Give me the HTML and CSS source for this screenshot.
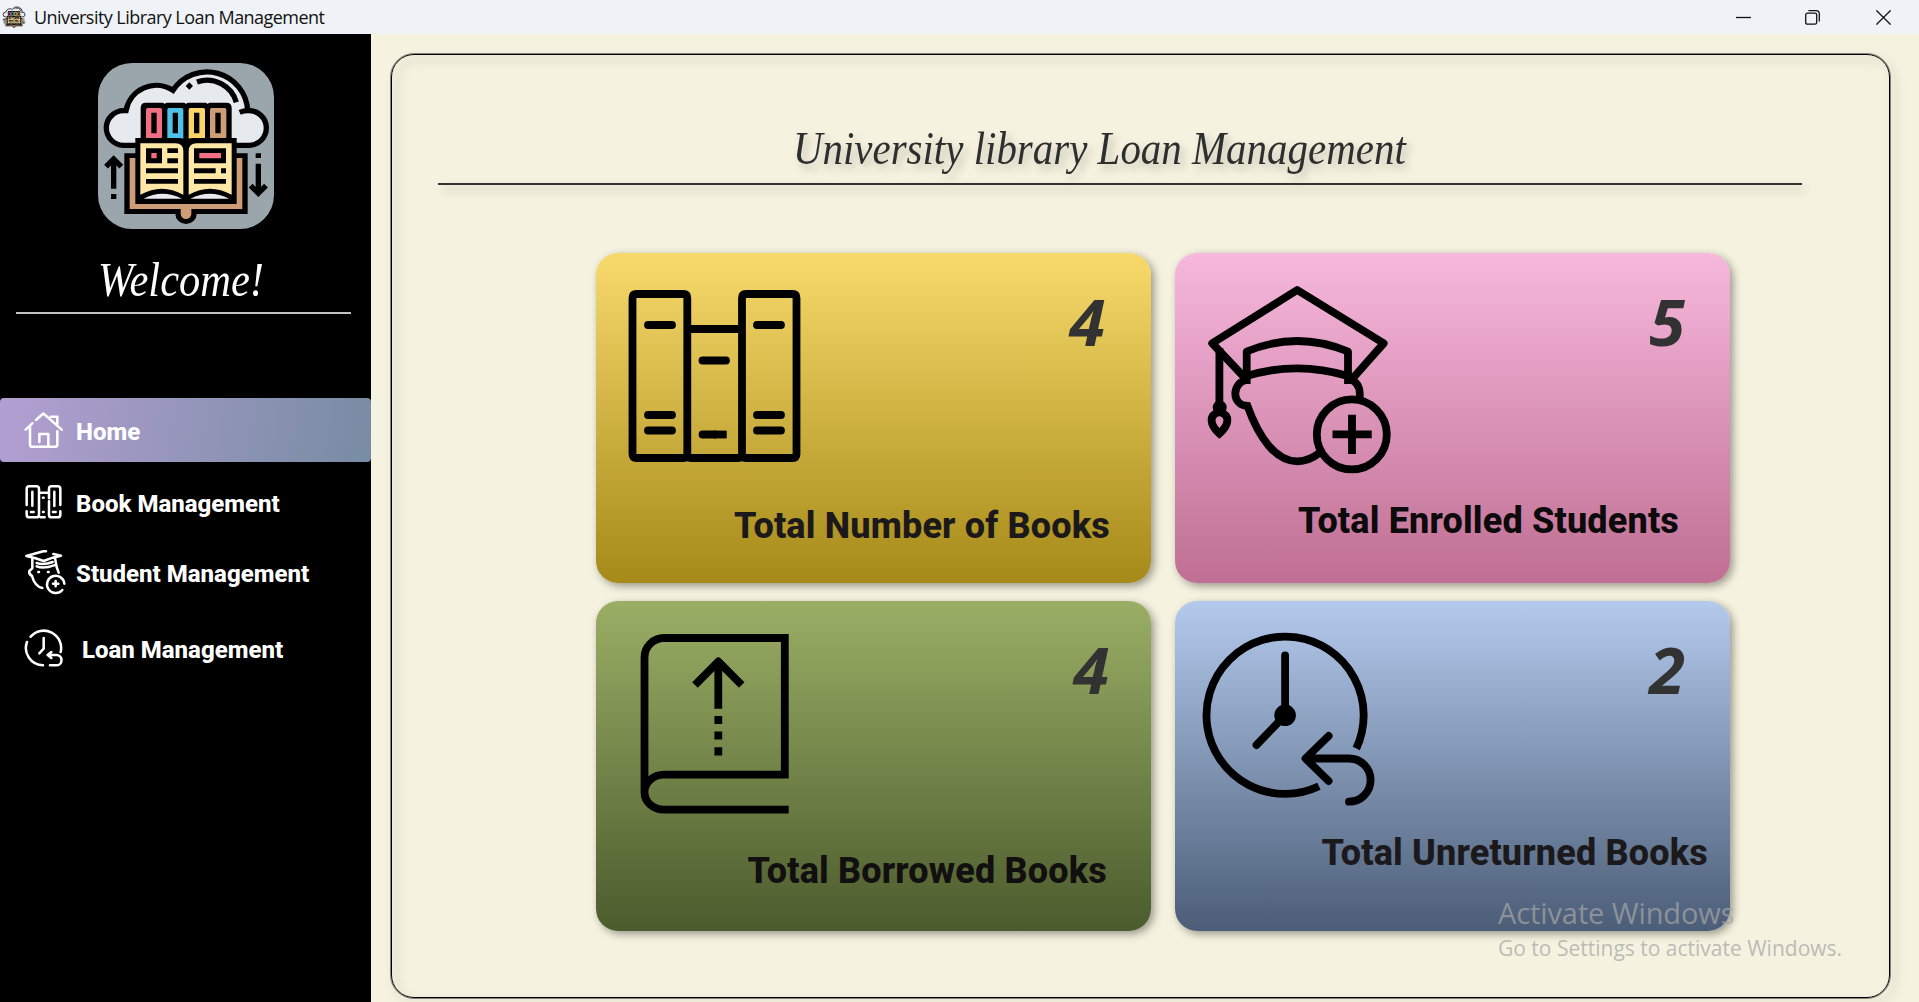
FILE: index.html
```html
<!DOCTYPE html>
<html lang="en">
<head>
<meta charset="utf-8">
<title>University Library Loan Management</title>
<link rel="stylesheet" href="styles.css">
</head>
<body>
<svg class="defs" aria-hidden="true">
  <symbol id="logo-art" viewBox="54 39 528 498">
    <g stroke="#000" stroke-width="16" fill="none">
      <path fill="#e6e9ee" d="M174 286H130A52 52 0 0 1 132 182H138A92 92 0 0 1 279 121A122 122 0 0 1 503 186V182A52 52 0 0 1 508 286H466Z" stroke="none"/>
      <path d="M174 286H130A52 52 0 0 1 132 182H138A92 92 0 0 1 279 121A122 122 0 0 1 503 182"/>
      <path d="M479 187Q490 182 506 182A52 52 0 0 1 508 286H466"/>
      <path d="M351 96A91 91 0 0 1 469 157"/>
    </g>
    <path d="M328 97l11 11-11 11-11-11z"/>
    <path d="M182 280V174q0-16 16-16h48q5 0 8 4 3-4 8-4h48q5 0 8 4 3-4 8-4h49q5 0 8 4 3-4 8-4h48q16 0 16 16v106z"/>
    <rect x="198" y="174" width="48" height="92" rx="5" fill="#f26f83"/>
    <path d="M262 179q0-5 5-5h38q5 0 5 5v92q-10-5-20-5h-28z" fill="#4fc1e9"/>
    <path d="M326 179q0-5 5-5h39q5 0 5 5v87h-28q-12 0-21 5z" fill="#fbd568"/>
    <rect x="390" y="174" width="49" height="92" rx="5" fill="#ce9c75"/>
    <path d="M214 188h16v62h-16zM278 188h16v62h-16zM342 188h16v62h-16zM406 188h16v62h-16z"/>
    <path d="M133 310H503V492H350a32 30 0 0 1-64 0H133z"/>
    <path fill="#ce9c75" d="M149 324H487V477H334V491a16 16 0 0 1-32 0V477H149z"/>
    <path d="M166 264H298q12 0 20 7 8-7 20-7H470V462H166z"/>
    <path fill="#ffe8a6" d="M181 280H286q24 0 24 24V434Q246 398 181 434zM455 280H350q-24 0-24 24V434Q390 398 455 434z"/>
    <path fill="#e6e9ee" d="M191 446Q246 417 306 446zM331 446Q390 417 447 446z"/>
    <path d="M198 295h48v45h-48zM262 295h32v14h-32zM262 325h32v15h-32zM198 355h96v15h-96zM198 387h96v14h-96zM342 295h96v45h-96zM342 355h65v15h-65zM423 355h15v15h-15zM342 387h96v14h-96z"/>
    <path fill="#f26f83" d="M214 309h16v16h-16zM358 309h65v16h-65z"/>
    <path d="M93 432h16v15H93zM527 310h16v14h-16z"/>
    <path fill="none" stroke="#000" stroke-width="16" d="M101 416V328M78 350l23-23 23 23M535 341v88M512 407l23 23 23-23"/>
  </symbol>
</svg>

<header class="titlebar">
  <svg class="titlebar__icon" viewBox="0 0 24 24"><use href="#logo-art" width="24" height="24"/></svg>
  <span class="titlebar__text">University Library Loan Management</span>
  <div class="titlebar__controls">
    <svg width="15" height="15" viewBox="0 0 15 15"><path d="M0 7.5H15"/></svg>
    <svg width="15" height="15" viewBox="0 0 15 15"><rect x=".7" y="3.2" width="11" height="11" rx="1.8"/><path d="M3.4 .7H11q3.3 0 3.3 3.3V11.6"/></svg>
    <svg width="15" height="15" viewBox="0 0 15 15"><path d="M.4 .4 14.6 14.6M14.6 .4 .4 14.6"/></svg>
  </div>
</header>

<div class="app">
  <aside class="sidebar">
    <div class="logo"><svg width="176" height="166"><use href="#logo-art" width="176" height="166"/></svg></div>
    <div class="welcome"><span>Welcome!</span></div>
    <nav class="nav">
      <a class="nav__item nav__item--active">
        <svg class="nav__icon" viewBox="72 60 132 120"><path d="M77 119 97 100M108 90 130 70 185 119M152 80H172V102M90 112V164Q90 170 96 170H166Q172 170 172 164V124M118 156V132H145V168"/></svg>
        <span>Home</span>
      </a>
      <a class="nav__item nav__item--books">
        <svg class="nav__icon" viewBox="72 276 132 120"><path d="M80 345V297Q80 289 88 289H109Q117 289 117 297V374Q117 382 109 382H88Q80 382 80 374V364M97 305V347M93 366H101M117 308H144M129 323H131M129 366H131M122 382H134M147 325V297Q147 289 154 289H173Q181 289 181 297V345M163 305V348M147 334V374Q147 382 154 382H173Q181 382 181 374V364M159 366H167"/></svg>
        <span>Book Management</span>
      </a>
      <a class="nav__item nav__item--students">
        <svg class="nav__icon nav__icon--tall" viewBox="72 480 132 138"><path d="M138 487H130L79 501 104 507 131 516 158 506 183 500 160 495M97 508V538L88 546Q86 556 96 561Q104 592 127 597M165 508 170 534 176 551M110 522Q131 529 158 519M110 532Q131 540 162 529M115 549H117M144 549H146M187 603A26 26 0 1 1 193 584M167 576V592M159 584H175"/></svg>
        <span>Student Management</span>
      </a>
      <a class="nav__item nav__item--loans">
        <svg class="nav__icon" viewBox="72 708 132 120"><path d="M92 734A52 52 0 0 1 182 780M81 750A52 52 0 0 0 129 820M131 738V770L118 784M143 789H169A15 15 0 0 1 169 820H150M154 780 143 789 154 798"/></svg>
        <span>Loan Management</span>
      </a>
    </nav>
  </aside>

  <main class="panel">
    <h1 class="panel__title"><span>University library Loan Management</span></h1>
    <section class="cards">
      <article class="card card--books">
        <svg class="card__icon" width="174" height="174" viewBox="628 289 174 174">
          <path d="M632.5 298Q632.5 294 636.5 294H683.3Q687.3 294 687.3 298V454Q687.3 458 683.3 458H636.5Q632.5 458 632.5 454ZM742 298Q742 294 746 294H792.5Q796.5 294 796.5 298V454Q796.5 458 792.5 458H746Q742 458 742 454ZM687 329H742M687 455Q687.5 458 691 458H738Q742 458 742 455"/>
          <path class="round" d="M648 325H672M648 415H672M648 430.5H672M757 325H781M757 415H781M757 430.5H781M702.5 360.5H726M702.5 434.5H715"/>
          <path d="M714 434.5H726.7"/>
        </svg>
        <output class="card__value">4</output>
        <h2 class="card__label">Total Number of Books</h2>
      </article>
      <article class="card card--students">
        <svg class="card__icon" width="186" height="190" viewBox="1206 284 186 190">
          <path stroke-linejoin="round" d="M1245 378 1212.2 343.3 1297.2 290 1383.7 343.3 1353 378"/>
          <path stroke-linejoin="round" d="M1246.7 384V351.5Q1297.2 330.5 1348 351.5V384M1246.7 376Q1297.2 360.6 1348 376"/>
          <path d="M1246 380C1232 383 1231 405 1247.5 406C1259 438 1276 461.3 1297.2 461.3Q1309 461.3 1320 452.5M1349 379C1357 381 1361 388 1359.5 398"/>
          <circle cx="1351.8" cy="434.4" r="35"/>
          <path d="M1332.5 434.4H1371.7M1352 414.7V454M1219.4 348V405"/>
          <circle class="solid" cx="1219.7" cy="407.5" r="7"/>
          <path d="M1219.4 412C1208 415 1210 425 1219.4 433.5C1229 425 1231 415 1219.4 412Z"/>
        </svg>
        <output class="card__value">5</output>
        <h2 class="card__label">Total Enrolled Students</h2>
      </article>
      <article class="card card--borrowed">
        <svg class="card__icon" width="150" height="182" viewBox="640 633 150 182">
          <path d="M788.7 809.7H664A19.5 17.5 0 0 1 644.5 792.2V657.5A19.5 19.5 0 0 1 664 638H784.8V774.7H664A19.5 17.5 0 0 0 644.5 792.2"/>
          <path stroke-linejoin="round" d="M695 685 718.3 661.5 741.7 685M718.3 661V708.7"/>
          <path d="M718.3 716V724M718.3 731.5V739.5M718.3 747.3V755.5"/>
        </svg>
        <output class="card__value">4</output>
        <h2 class="card__label">Total Borrowed Books</h2>
      </article>
      <article class="card card--unreturned">
        <svg class="card__icon" width="174" height="176" viewBox="1202 632 174 176">
          <path d="M1356.3 748.5A78.6 78.6 0 1 0 1318.9 786.2"/>
          <path class="round" d="M1285.1 655.5V715.3L1256.5 745M1328.6 736 1305.5 758.5 1328.6 781M1307 758.5H1349A21.6 21.6 0 0 1 1349 801.7"/>
          <circle class="solid" cx="1285.1" cy="715.3" r="10.8"/>
        </svg>
        <output class="card__value">2</output>
        <h2 class="card__label">Total Unreturned Books</h2>
      </article>
    </section>
  </main>
</div>

<div class="watermark">
  <p class="watermark__head">Activate Windows</p>
  <p class="watermark__body">Go to Settings to activate Windows.</p>
</div>
</body>
</html>
```
FILE: styles.css
```css
* { box-sizing: border-box; }

body {
  margin: 0;
  height: 100vh;
  overflow: hidden;
  display: flex;
  flex-direction: column;
  background: #f5f2df;
  font-family: Roboto, "Liberation Sans", sans-serif;
}

h1, h2, p { margin: 0; }

.defs { display: none; }

/* Window title bar */
.titlebar {
  flex: none;
  height: 34px;
  display: flex;
  align-items: center;
  padding: 0 28px 0 2px;
  background: #eff3f8;
}

.titlebar__icon { width: 24px; height: 24px; }

.titlebar__text {
  margin-left: 8px;
  font: 18px "Segoe UI", "Open Sans", sans-serif;
  letter-spacing: -0.55px;
  white-space: nowrap;
  color: #111;
}

.titlebar__controls {
  margin-left: auto;
  display: flex;
  gap: 56px;
}

.titlebar__controls svg {
  fill: none;
  stroke: #111;
  stroke-width: 1.3;
}

.titlebar__controls svg:first-child { margin-right: -2px; }

.app { flex: 1; display: flex; min-height: 0; }

/* Sidebar */
.sidebar {
  flex: none;
  width: 371px;
  background: #000;
  color: #fff;
}

.logo {
  width: 176px;
  height: 166px;
  margin: 29px 0 0 98px;
  border-radius: 34px;
  background: #9ba6ac;
}

.logo svg { display: block; }

.welcome {
  margin: 0 20px 0 16px;
  height: 85px;
  padding: 23px 0 0 82px;
  border-bottom: 2px solid #c3c3c3;
  font: italic 48px/56px Gabriola, "Liberation Serif", serif;
  white-space: nowrap;
}

.welcome span { display: inline-block; transform-origin: left; transform: scaleX(.885); }

.nav { margin-top: 84px; }

.nav__item {
  display: flex;
  align-items: center;
  height: 64px;
  padding-left: 24px;
  gap: 8px;
  font-size: 24px;
  font-weight: 800;
  white-space: nowrap;
}

.nav__item span { padding-top: 4px; }

.nav__item--active {
  border-radius: 4px;
  background: linear-gradient(100deg, #b39fd2, #778ca3);
}

.nav__item--books { margin-top: 8px; }
.nav__item--students { margin-top: 6px; }
.nav__item--loans { margin-top: 12px; gap: 14px; }

.nav__icon {
  width: 44px;
  height: 40px;
  fill: none;
  stroke: #fff;
  stroke-width: 7.6;
  stroke-linecap: round;
  stroke-linejoin: round;
}

.nav__icon--tall { height: 46px; }

/* Main panel: the outline throws its shadow on both sides */
.panel {
  position: relative;
  flex: 1;
  margin: 20px 29px 4px 20px;
}

.panel::before {
  content: "";
  position: absolute;
  inset: 0;
  border: 1px solid #000;
  border-radius: 23px;
  outline: 1px solid rgba(0, 0, 0, .45);
  filter: drop-shadow(5px 5px 5px rgba(0, 0, 0, .3));
  pointer-events: none;
}

.panel__title {
  width: 1364px;
  height: 131px;
  margin-left: 47px;
  padding: 67px 41px 0 0;
  border-bottom: 2px solid #333;
  filter: drop-shadow(4px 5px 4px rgba(0, 0, 0, .22));
  color: #2e2e2e;
  font: italic 46px/56px Gabriola, "Liberation Serif", serif;
  text-align: center;
  white-space: nowrap;
}

.panel__title span { display: inline-block; transform: scaleX(.89); }

/* Statistic cards */
.cards {
  display: grid;
  grid-template-columns: 555px 555px;
  grid-auto-rows: 330px;
  gap: 18px 24px;
  margin: 68px 0 0 205px;
}

.card {
  display: grid;
  grid-template: 1fr auto / auto 1fr;
  border-radius: 22px;
  box-shadow: 3px 3px 8px rgba(0, 0, 0, .38);
}

.card--books { background: linear-gradient(#f7da6b, #a58919); padding: 36px 41px 39px 32px; }
.card--students { background: linear-gradient(#f6b8dc, #bf6f93); padding: 31px 51px 44px 31px; }
.card--borrowed { background: linear-gradient(#9bae65, #4b5b2d); padding: 32px 44px 42px 44px; }
.card--unreturned { background: linear-gradient(#b4caed, #4b5d77); padding: 31px 22px 60px 27px; }

.card__icon {
  display: block;
  fill: none;
  stroke: #000;
  stroke-width: 7.8;
}

.round { stroke-linecap: round; stroke-linejoin: round; }
.solid { fill: #000; stroke: none; }

.card__value {
  justify-self: end;
  font: italic 700 65px/64px "Segoe UI", "Open Sans", sans-serif;
  color: #323232;
}

.card--books .card__value { margin: 0 5px 0 0; }
.card--students .card__value { margin: 5px -6px 0 0; }
.card--borrowed .card__value { margin: 4px -2px 0 0; }
.card--unreturned .card__value { margin: 5px 23px 0 0; }

.card__label {
  grid-column: 1 / -1;
  justify-self: end;
  font-size: 36px;
  font-weight: 800;
  line-height: 36px;
  letter-spacing: .17px;
  white-space: nowrap;
  color: #1b191b;
}

.card--students .card__label { color: #0d0a0c; }
.card--borrowed .card__label { color: #120f10; }

/* System notice over the desktop corner */
.watermark {
  position: absolute;
  left: 1498px;
  top: 893px;
  font-family: "Segoe UI", "Open Sans", sans-serif;
  color: rgba(165, 165, 165, .72);
  white-space: nowrap;
}

.watermark__head { font-size: 29px; line-height: 40px; letter-spacing: -.1px; }
.watermark__body { font-size: 21px; line-height: 30px; letter-spacing: 0; }
```
